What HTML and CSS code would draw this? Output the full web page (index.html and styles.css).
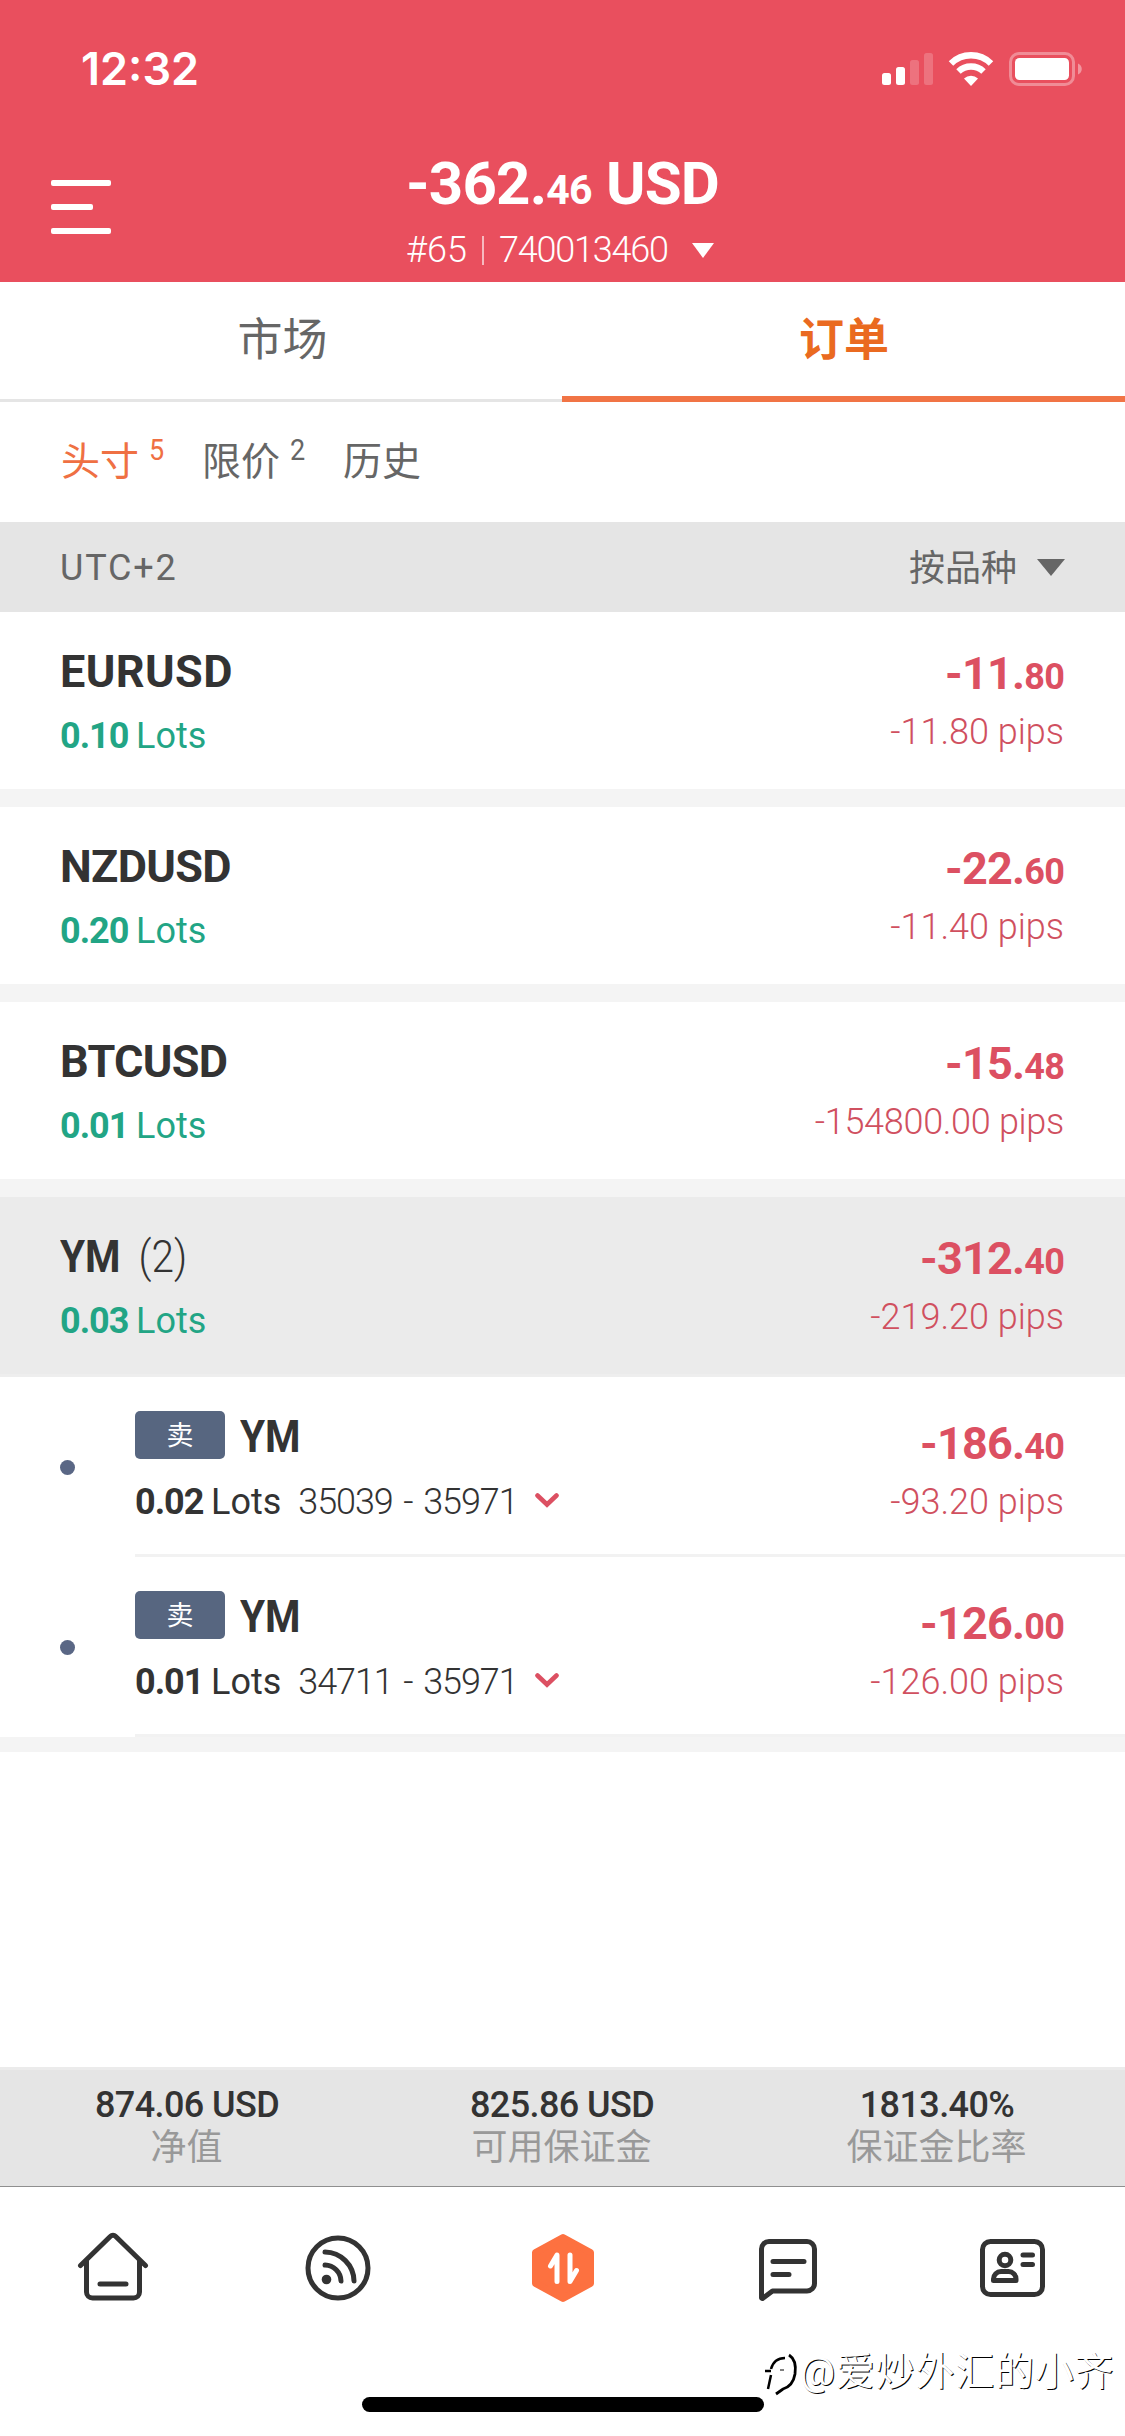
FILE: index.html
```html
<!DOCTYPE html>
<html lang="zh-CN">
<head>
<meta charset="utf-8">
<title>订单</title>
<link rel="stylesheet" href="styles.css">
</head>
<body>
<header class="header">
  <div class="status">
    <span class="clock">12:32</span>
    <svg class="status-icons" width="204" height="40" viewBox="0 0 204 40" fill="#fff">
      <rect x="1" y="22" width="9" height="12" rx="2.5"/>
      <rect x="15" y="16" width="9" height="18" rx="2.5"/>
      <rect x="29" y="9" width="9" height="25" rx="2.5" opacity=".2"/>
      <rect x="43" y="2" width="9" height="32" rx="2.5" opacity=".2"/>
      <g fill="none" stroke="#fff" stroke-width="6.4">
        <path d="M70 12.500a28.500 28.500 0 0 1 40 0"/>
        <path d="M77.500 20.500a18 18 0 0 1 25 0"/>
      </g>
      <path d="M90 35l-7-7.500a10.500 10.500 0 0 1 14 0z"/>
      <rect x="129.500" y="2.500" width="63" height="31" rx="8.500" fill="none" stroke="#fff" stroke-width="3" opacity=".35"/>
      <rect x="134" y="7" width="54" height="22" rx="4.500"/>
      <path d="M197 12.500c5 2 5 9 0 11z" opacity=".4"/>
    </svg>
  </div>
  <div class="account">
    <svg class="menu" width="60" height="54" viewBox="0 0 60 54" fill="#fff">
      <rect width="60" height="6" rx="2"/><rect y="24" width="42" height="6" rx="2"/><rect y="48" width="60" height="6" rx="2"/>
    </svg>
    <div class="balance-block">
      <div class="balance">-362.<small>46</small> USD</div>
      <div class="account-id"><span>#65</span><i class="bar"></i><span class="number">740013460</span><i class="caret caret-white"></i></div>
    </div>
  </div>
</header>

<nav class="tabs">
  <div class="tab">市场</div>
  <div class="tab tab-active">订单</div>
</nav>

<div class="filters">
  <span class="filter filter-active">头寸<sup>5</sup></span>
  <span class="filter">限价<sup>2</sup></span>
  <span class="filter">历史</span>
</div>

<div class="sortbar">
  <span class="utc">UTC+2</span>
  <span class="sort"><span class="sort-label">按品种</span><i class="caret caret-gray"></i></span>
</div>

<main class="list">
  <section class="row">
    <div><div class="name name-wide">EURUSD</div><div class="lots"><b>0.10</b><span>Lots</span></div></div>
    <div class="values"><div class="pl">-11.<small>80</small></div><div class="pips">-11.80 pips</div></div>
  </section>
  <section class="row">
    <div><div class="name name-tight">NZDUSD</div><div class="lots"><b>0.20</b><span>Lots</span></div></div>
    <div class="values"><div class="pl">-22.<small>60</small></div><div class="pips">-11.40 pips</div></div>
  </section>
  <section class="row">
    <div><div class="name name-tight">BTCUSD</div><div class="lots"><b>0.01</b><span>Lots</span></div></div>
    <div class="values"><div class="pl">-15.<small>48</small></div><div class="pips pips-long">-154800.00 pips</div></div>
  </section>
  <section class="row row-open">
    <div><div class="name name-narrow">YM<span class="count">(2)</span></div><div class="lots"><b>0.03</b><span>Lots</span></div></div>
    <div class="values"><div class="pl">-312.<small>40</small></div><div class="pips">-219.20 pips</div></div>
  </section>
  <section class="order">
    <i class="dot"></i>
    <div class="order-body">
      <div>
        <div class="order-head"><span class="badge">卖</span><span class="name name-narrow">YM</span></div>
        <div class="lots lots-dark"><b>0.02</b><span>Lots</span><span class="prices">35039 - 35971</span>
          <svg class="chevron" width="24" height="15" viewBox="0 0 24 15"><path d="M2.500 2.500L12 11.500L21.500 2.500" fill="none" stroke="#dc5062" stroke-width="4.600" stroke-linecap="round"/></svg></div>
      </div>
      <div class="values"><div class="pl">-186.<small>40</small></div><div class="pips">-93.20 pips</div></div>
    </div>
  </section>
  <section class="order">
    <i class="dot"></i>
    <div class="order-body">
      <div>
        <div class="order-head"><span class="badge">卖</span><span class="name name-narrow">YM</span></div>
        <div class="lots lots-dark"><b>0.01</b><span>Lots</span><span class="prices">34711 - 35971</span>
          <svg class="chevron" width="24" height="15" viewBox="0 0 24 15"><path d="M2.500 2.500L12 11.500L21.500 2.500" fill="none" stroke="#dc5062" stroke-width="4.600" stroke-linecap="round"/></svg></div>
      </div>
      <div class="values"><div class="pl">-126.<small>00</small></div><div class="pips">-126.00 pips</div></div>
    </div>
  </section>
  <div class="list-end"></div>
</main>

<div class="summary">
  <div class="stat"><div class="stat-value">874.06 USD</div><div class="stat-label">净值</div></div>
  <div class="stat"><div class="stat-value">825.86 USD</div><div class="stat-label">可用保证金</div></div>
  <div class="stat"><div class="stat-value">1813.40%</div><div class="stat-label">保证金比率</div></div>
</div>

<footer class="dock">
  <svg class="icon" viewBox="0 0 72 72">
    <path d="M3.500 33.500L33.500 4.300a3.500 3.500 0 0 1 5 0L68.500 33.500M9.500 28V60a6 6 0 0 0 6 6H56.500a6 6 0 0 0 6-6V28M23 52H49"/>
  </svg>
  <svg class="icon" viewBox="0 0 72 72">
    <circle cx="36" cy="36" r="30"/><path d="M23 20A29.500 29.500 0 0 1 52 49M23 33A16.500 16.500 0 0 1 39 49"/><circle cx="24.500" cy="47.500" r="4.800" class="solid"/>
  </svg>
  <svg class="icon" viewBox="0 0 72 72">
    <path class="hex" d="M36 5.500L63.500 20.500V51.500L36 66.500L8.500 51.500V20.500Z"/>
    <path class="arrows" d="M23.500 34L30 23V49.500M43 23V49.500L49.500 38.500"/>
  </svg>
  <svg class="icon" viewBox="0 0 72 72">
    <path d="M9.500 66V17a7.500 7.500 0 0 1 7.500-7.500H55a7.500 7.500 0 0 1 7.500 7.500V51.500a7.500 7.500 0 0 1-7.500 7.500H20.500L10.500 66.500ZM21 29.500H52M21 42.500H37"/>
  </svg>
  <svg class="icon" viewBox="0 0 72 72">
    <rect x="5.500" y="9.500" width="60" height="53" rx="8"/><circle cx="28" cy="28" r="5.800"/><path d="M16.500 48.500V47a7.500 7.500 0 0 1 7.500-7.500H31.500a7.500 7.500 0 0 1 7.500 7.500V48.500ZM46 23H55.500M46 32.500H55.500"/>
  </svg>
</footer>
<div class="home-bar"></div>
<div class="watermark">
  <svg width="36" height="48" viewBox="0 0 36 48"><g fill="none" stroke="#000"><path stroke-width="2.500" d="M1 21H7M4 39L7 25M7 19Q10 8 21 8"/><path stroke-width="1" d="M16 20H20"/><path stroke-width="2.800" d="M25 5Q33 10 31 24Q29 36 19 39L12 44"/></g></svg>
  <span>@爱炒外汇的小齐</span>
</div>
</body>
</html>
```
FILE: styles.css
```css
* { box-sizing: border-box; }
body {
  margin: 0;
  width: 1125px;
  height: 2436px;
  position: relative;
  overflow: hidden;
  display: flex;
  flex-direction: column;
  background: #fff;
  color: #333;
  font-family: Roboto, "Noto Sans CJK SC", sans-serif;
  white-space: nowrap;
}

.header { height: 282px; background: #e94f5e; color: #fff; }
.status {
  height: 140px;
  padding: 0 40px 0 81px;
  display: flex;
  justify-content: space-between;
}
.clock { font: 600 45px/54px Inter, sans-serif; margin-top: 42px; letter-spacing: 0; }
.status-icons { margin-top: 51px; }
.account { display: flex; padding-left: 51px; }
.menu { margin-top: 40px; }
.balance-block { margin-left: 295px; }
.balance { font-size: 60px; font-weight: 700; line-height: 70px; margin-top: 9px; letter-spacing: -.8px; }
.balance small { font-size: 41px; }
.account-id {
  display: flex;
  align-items: center;
  font-size: 36px;
  font-weight: 300;
  line-height: 42px;
  margin-top: 4px;
}
.bar { width: 2px; height: 29px; background: #f6b9bf; margin: 0 15px 0 15px; }
.number { letter-spacing: -1.2px; margin-right: 24px; }
.caret { display: inline-block; border: 11px solid transparent; border-bottom: 0; }
.caret-white { border-top: 15px solid #fff; }
.caret-gray { border-width: 17px 14.5px 0; border-top-color: #666; }

.tabs { height: 120px; display: grid; grid-template-columns: 562px 563px; }
.tab {
  font-size: 45px;
  line-height: 117px;
  height: 120px;
  text-align: center;
  color: #666;
  border-bottom: 3px solid #e5e5e5;
  padding-left: 3px;
}
.tab-active { color: #ea6a20; font-weight: 700; border-bottom: 6px solid #f17445; padding-left: 1px; }

.filters { height: 120px; padding: 30px 61px 0; display: flex; color: #666; }
.filter { font-size: 39px; line-height: 60px; display: flex; width: 141px; }
.filter sup { font-size: 30px; line-height: 36px; margin-left: 10px; font-weight: 400; transform: scaleX(.9); transform-origin: left; }
.filter-active { color: #ef7043; }

.sortbar {
  height: 90px;
  padding: 2px 60px 0;
  display: flex;
  align-items: center;
  justify-content: space-between;
  background: #e5e5e5;
  color: #666;
  font-size: 36px;
}
.utc { letter-spacing: 1.8px; }
.sort { display: flex; align-items: center; gap: 18px; }
.sort-label { margin: -6px 2px 0 0; }
.caret-gray { margin-top: -2px; }

.row {
  height: 195px;
  padding: 34px 61px 0 60px;
  display: flex;
  justify-content: space-between;
  border-bottom: 18px solid #f4f4f4;
}
.row-open { height: 180px; background: #ebebeb; border-bottom: 3px solid #eee; }
.name { font-size: 45px; font-weight: 700; line-height: 52px; }
.name-wide { letter-spacing: .4px; }
.name-tight { letter-spacing: -.7px; }
.name-narrow { transform: scaleX(.9); transform-origin: left; }
.count { font-weight: 300; margin-left: 20px; }
.lots { color: #22a585; font-size: 36px; line-height: 42px; display: flex; margin-top: 17px; }
.lots b { width: 76px; letter-spacing: -1px; }
.lots-dark { color: #333; align-items: center; }
.values { text-align: right; color: #dc5062; }
.pl { font-size: 45px; font-weight: 700; line-height: 52px; margin-top: 2px; letter-spacing: -.8px; }
.pl small { font-size: 36px; }
.pips { font-size: 36px; font-weight: 300; line-height: 42px; margin-top: 8px; color: #d0505f; }
.pips-long { letter-spacing: -.3px; }

.order { height: 180px; display: flex; }
.dot { width: 15px; height: 15px; border-radius: 50%; background: #5a6785; margin: 83px 60px 0; }
.order-body {
  flex: 1;
  display: flex;
  justify-content: space-between;
  padding: 34px 61px 0 0;
  border-bottom: 3px solid #f2f2f2;
}
.order-head { display: flex; height: 52px; }
.badge {
  width: 90px;
  height: 48px;
  border-radius: 5px;
  background: #576680;
  color: #fff;
  font-size: 27px;
  line-height: 50px;
  text-align: center;
  margin-right: 15px;
}
.order .lots { margin-top: 18px; }
.order .values { padding-top: 5px; }
.prices { font-weight: 300; margin: 0 17px 0 17px; letter-spacing: -1.1px; word-spacing: 3px; }
.chevron { margin-top: -3px; }
.list-end { height: 15px; background: #f4f4f4; }

.summary {
  height: 120px;
  margin-top: 315px;
  display: grid;
  grid-template-columns: repeat(3, 1fr);
  background: #e5e5e5;
  border-top: 3px solid #ebebeb;
  border-bottom: 1px solid #8f8f8f;
  text-align: center;
}
.stat { padding-top: 14px; }
.stat-value { font-size: 36px; font-weight: 500; line-height: 42px; letter-spacing: -.6px; padding-right: 1px; }
.stat-label { font-size: 36px; line-height: 42px; margin-top: 1px; padding-right: 2px; color: #999; }

.dock { height: 249px; padding-top: 45px; display: grid; grid-template-columns: repeat(5, 1fr); justify-items: center; }
.icon {
  width: 72px;
  height: 72px;
  fill: none;
  stroke: #333;
  stroke-width: 5;
  stroke-linecap: round;
  stroke-linejoin: round;
}
.icon .solid { fill: #333; stroke: none; }
.icon .hex { fill: #fd7140; stroke: #fd7140; stroke-width: 7; }
.icon .arrows { stroke: #fff; }
.home-bar { position: absolute; left: 362px; top: 2397px; width: 402px; height: 15px; border-radius: 8px; background: #000; }
.watermark {
  position: absolute;
  left: 764px;
  top: 2350px;
  display: flex;
  font-size: 39px;
  line-height: 44px;
  letter-spacing: .8px;
  color: #fff;
  text-shadow: 1px 1px 0 #000;
}
```
